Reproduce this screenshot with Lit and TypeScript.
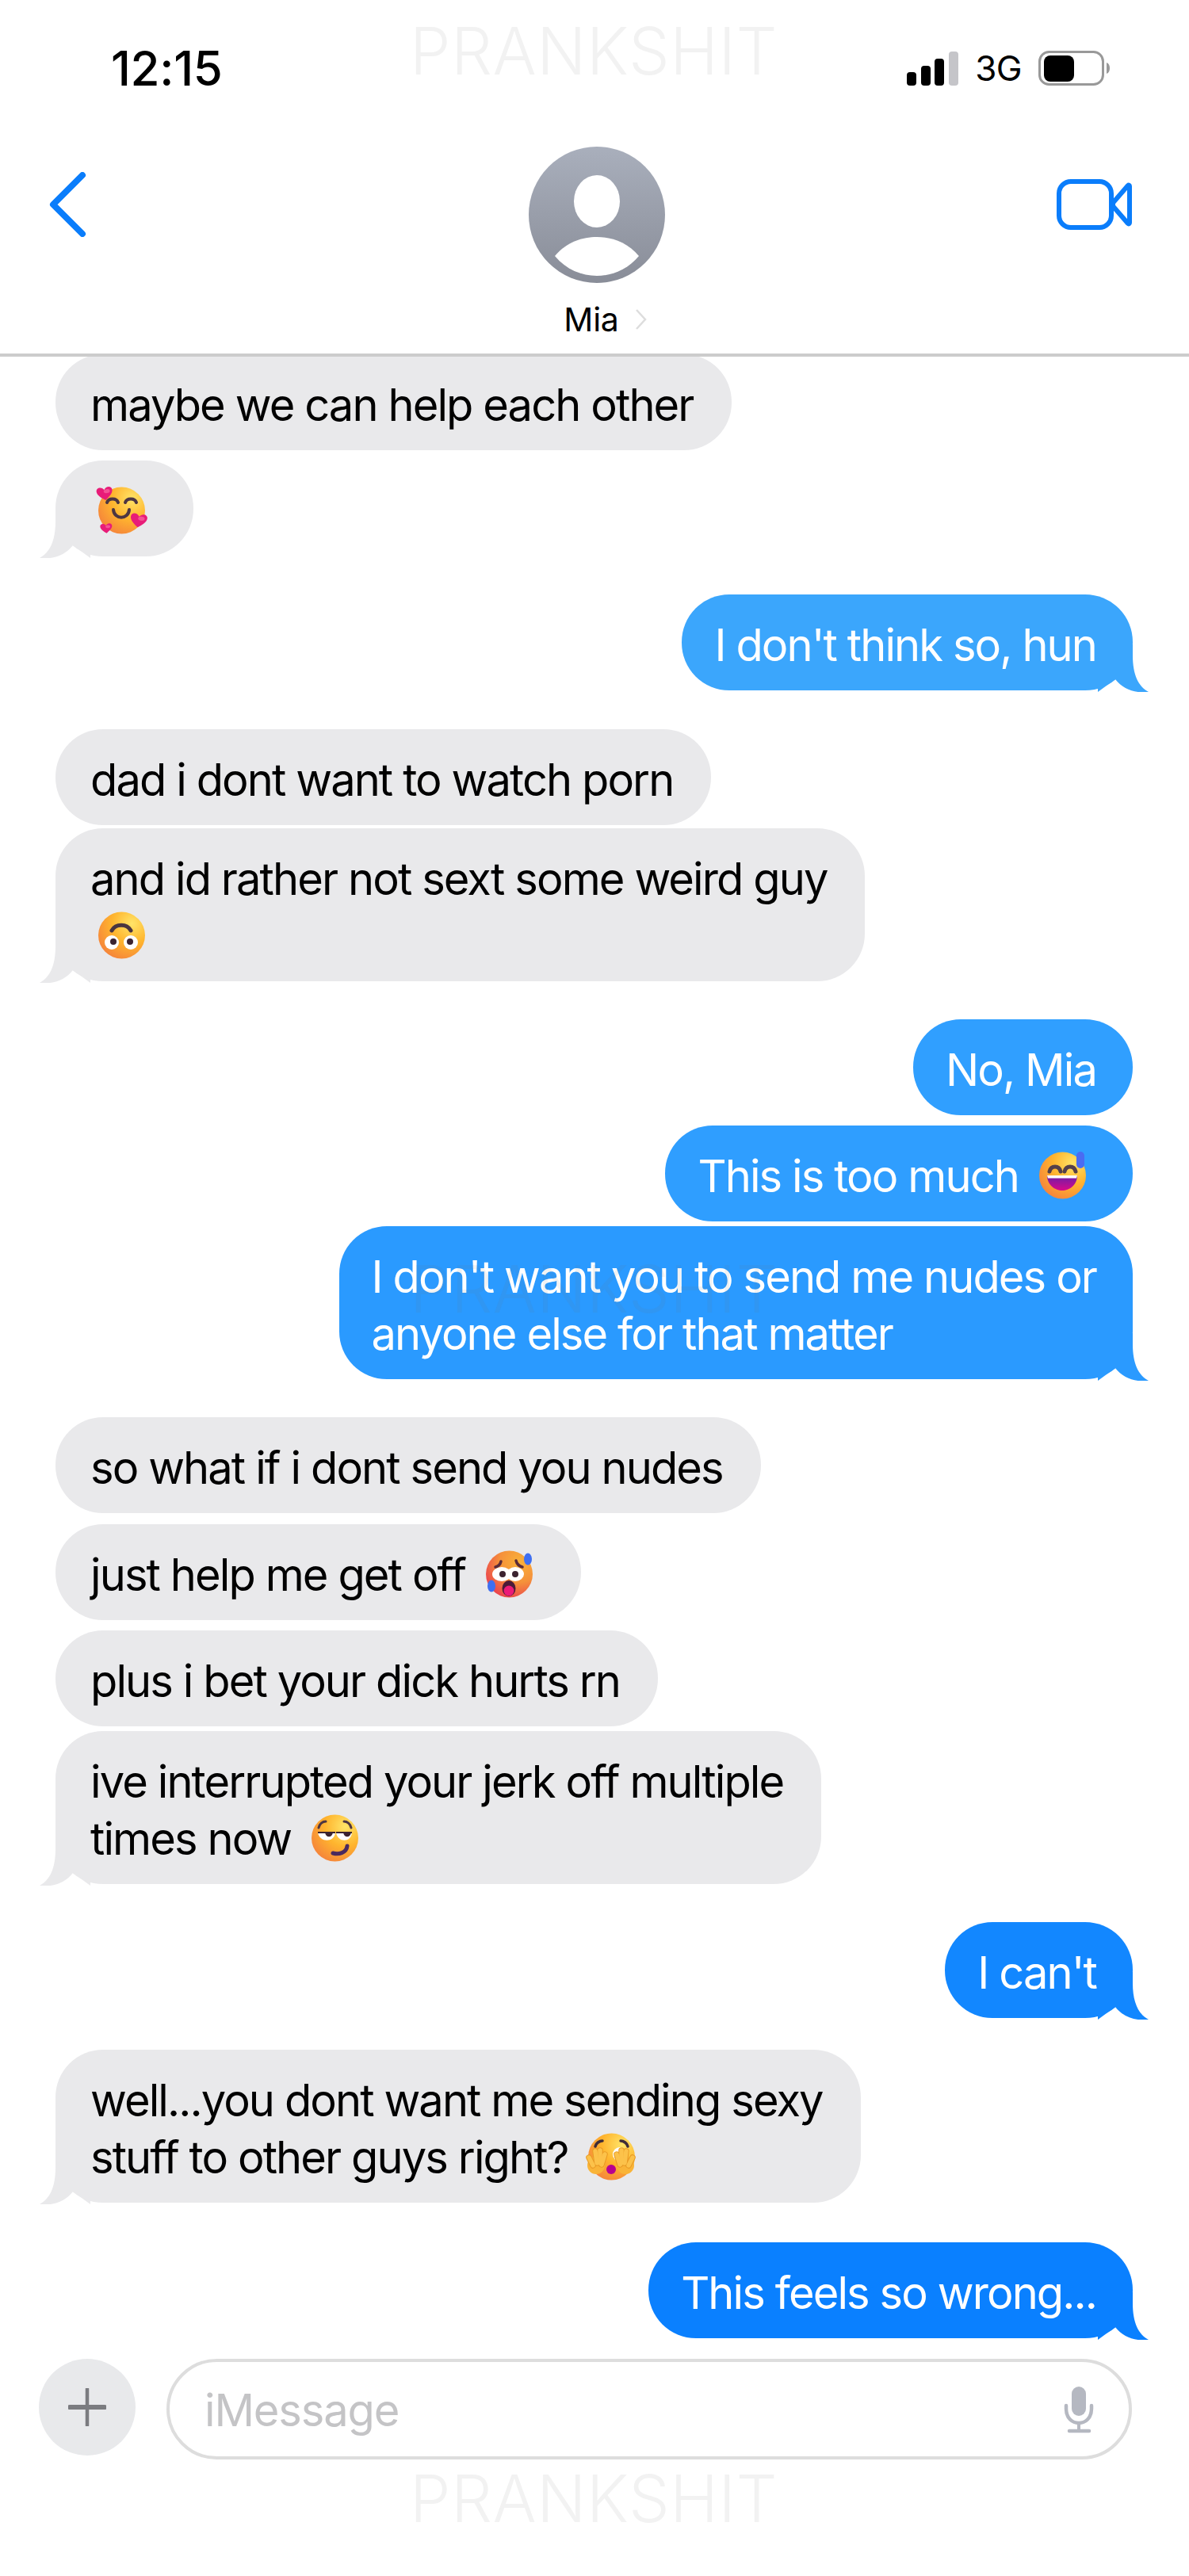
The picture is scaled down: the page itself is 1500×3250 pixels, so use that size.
import { LitElement, html, css, svg, nothing } from "lit";
import { customElement } from "lit/decorators.js";

let uid = 0;
const face = (extra: string, stops?: [string, string, string]) => {
  const id = `f${uid++}`;
  const s = stops ?? ["#ffe468", "#ffb52e", "#f4803c"];
  return { id, defs: svg`<defs>
    <radialGradient id=${id} cx="0.72" cy="0.25" r="0.95">
      <stop offset="0" stop-color=${s[0]}/><stop offset="0.45" stop-color=${s[1]}/><stop offset="0.92" stop-color=${s[2]}/><stop offset="1" stop-color="#f472a8"/>
    </radialGradient></defs>`, extra };
};
const base = (f: ReturnType<typeof face>, body: unknown) => html`<svg class="emoji" viewBox="0 0 60 60">
  ${f.defs}<circle cx="29.5" cy="30" r="29.5" fill=${`url(#${f.id})`}></circle>${body}</svg>`;

const heart = (x: number, y: number, s: number, r: number) => svg`<path transform=${`translate(${x} ${y}) rotate(${r}) scale(${s})`}
  d="M0 9C-4 6-10 2-10-3C-10-8-3-9 0-4C3-9 10-8 10-3C10 2 4 6 0 9Z" fill="#e81c78"/>
  <ellipse transform=${`translate(${x} ${y}) rotate(${r}) scale(${s})`} cx="3" cy="-2" rx="4" ry="2.5" fill="#fa6aa0" opacity=".7"/>`;

const emojis: Record<string, () => unknown> = {
  hearts: () => base(face(""), svg`
    <g fill="none" stroke="#4d3642" stroke-width="4" stroke-linecap="round">
      <path d="M11 20C13 14 23 14 25 20"/><path d="M34 20C36 14 46 14 48 20"/><path d="M19 29C20 42 38 42 39 29"/>
    </g>${heart(8, 8, 1, -8)}${heart(51, 42, 1.05, 8)}${heart(10, 52, .75, -5)}`),
  upside: () => base(face(""), svg`
    <path d="M17 24C22 15 36 15 41 24" fill="none" stroke="#4a3540" stroke-width="5" stroke-linecap="round"/>
    <circle cx="17" cy="39" r="9" fill="#fff"/><circle cx="41" cy="39" r="9" fill="#fff"/>
    <circle cx="19" cy="38" r="4" fill="#3b2330"/><circle cx="40" cy="38" r="4" fill="#3b2330"/>`),
  sweat: () => base(face(""), svg`
    <defs><linearGradient id="mg" x1="0" y1="0" x2="0" y2="1"><stop offset="0" stop-color="#6a1fa8"/><stop offset="1" stop-color="#d9088a"/></linearGradient></defs>
    <g fill="none" stroke="#54404a" stroke-width="5" stroke-linecap="round"><path d="M13 25C15 17 25 17 27 25"/><path d="M32 25C34 17 44 17 46 25"/></g>
    <path d="M10 30H48C48 42 38 49 29 49C20 49 10 42 10 30Z" fill="url(#mg)"/>
    <path d="M10 30H48L47 33.5H11Z" fill="#fff"/>
    <rect x="47" y="0" width="10" height="21" rx="5" fill="#4a6cf2"/>`),
  hot: () => base(face("", ["#f9b23a", "#f5913a", "#ea3a50"]), svg`
    <g fill="none" stroke="#5a2b3a" stroke-width="3.5" stroke-linecap="round"><path d="M12 21C16 20 18 18 19 14"/><path d="M38 13C39 17 42 20 46 21"/></g>
    <ellipse cx="20" cy="30" rx="12" ry="9" fill="#fff"/><ellipse cx="37" cy="30" rx="11" ry="9" fill="#fff"/>
    <circle cx="21" cy="30" r="4" fill="#3b2330"/><circle cx="37" cy="30" r="4" fill="#3b2330"/>
    <ellipse cx="29" cy="48" rx="8.5" ry="10" fill="#4a1a38"/><ellipse cx="29" cy="51" rx="6.5" ry="6.5" fill="#ec1a78"/>
    <ellipse cx="53" cy="11" rx="5" ry="7.5" fill="#3f6ff0"/><ellipse cx="7" cy="45" rx="5" ry="7.5" fill="#3f6ff0"/>`),
  smirk: () => base(face(""), svg`
    <g fill="none" stroke-linecap="round"><path d="M9 17C10 12 14 9 18 9" stroke="#4d3642" stroke-width="3"/><path d="M41 9C45 9 49 12 50 17" stroke="#4d3642" stroke-width="3"/>
    <path d="M27 49C34 51 44 49 45 40" stroke="#4b2a5e" stroke-width="5"/></g>
    <path d="M8 23H30C29 36 10 36 8 23Z" fill="#fff"/><path d="M31 23H51C50 36 33 36 31 23Z" fill="#fff"/>
    <path d="M17 23H27C26 30 18 30 17 23Z" fill="#3b2330"/><path d="M40 23H50C49 30 41 30 40 23Z" fill="#3b2330"/>
    <path d="M8 23H30M31 23H51" stroke="#3b2330" stroke-width="2"/>`),
  kiss: () => {
    const hand = svg`<ellipse cx="10" cy="41" rx="11" ry="11" fill="#f9b438"/>
      <g fill="none" stroke-linecap="round">
        <g stroke="#e89a24" stroke-width="7.5"><path d="M1 31L6 41"/><path d="M9 23L11 38"/><path d="M15 22L15 38"/><path d="M21 27L17 40"/></g>
        <g stroke="#fcc24a" stroke-width="5.5"><path d="M1 31L6 41"/><path d="M9 23L11 38"/><path d="M15 22L15 38"/><path d="M21 27L17 40"/></g>
      </g>`;
    return base(face(""), svg`
    <g fill="none" stroke="#3f2c38" stroke-width="3.5" stroke-linecap="round"><path d="M9 17C10 13 14 10 18 10"/><path d="M41 10C45 10 49 13 50 17"/></g>
    <circle cx="40" cy="27" r="9" fill="#fff"/><circle cx="38" cy="30" r="4.5" fill="#3b2330"/>
    <circle cx="29" cy="46" r="6" fill="#b8008f"/>
    ${hand}<g transform="translate(57) scale(-1 1)">${hand}</g>`);
  },
};

type Msg = { me?: boolean; lines: string[]; emoji?: string; tail?: boolean; gap: number; color?: string };
const messages: Msg[] = [
  { lines: ["maybe we can help each other"], gap: -3 },
  { lines: [""], emoji: "hearts", tail: true, gap: 13 },
  { me: true, lines: ["I don't think so, hun"], tail: true, gap: 48, color: "#3ba6fc" },
  { lines: ["dad i dont want to watch porn"], gap: 49 },
  { lines: ["and id rather not sext some weird guy", ""], emoji: "upside", tail: true, gap: 4 },
  { me: true, lines: ["No, Mia"], gap: 48, color: "#309fff" },
  { me: true, lines: ["This is too much"], emoji: "sweat", gap: 13, color: "#2f9eff" },
  { me: true, lines: ["I don't want you to send me nudes or", "anyone else for that matter"], tail: true, gap: 6, color: "#2a9aff" },
  { lines: ["so what if i dont send you nudes"], gap: 48 },
  { lines: ["just help me get off"], emoji: "hot", gap: 14 },
  { lines: ["plus i bet your dick hurts rn"], gap: 13 },
  { lines: ["ive interrupted your jerk off multiple", "times now"], emoji: "smirk", tail: true, gap: 6 },
  { me: true, lines: ["I can't"], tail: true, gap: 48, color: "#1287ff" },
  { lines: ["well...you dont want me sending sexy", "stuff to other guys right?"], emoji: "kiss", tail: true, gap: 40 },
  { me: true, lines: ["This feels so wrong..."], tail: true, gap: 50, color: "#0a80ff" },
];

@customElement("app-root")
export class AppRoot extends LitElement {
  static styles = css`
    :host { display: block; width: 1500px; height: 3250px; position: relative; overflow: hidden; background: #fff;
      font-family: Inter, "Liberation Sans", sans-serif; color: #000; }
    .header { position: relative; z-index: 1; box-sizing: border-box; height: 450px; padding-top: 56px; background: #fff; border-bottom: 4px solid #ccc; }
    .status { height: 60px; display: flex; justify-content: space-between; align-items: center; padding: 0 100px 0 140px; }
    .time { font-size: 60px; font-weight: 500; letter-spacing: -.3px; line-height: 60px; }
    .right { display: flex; align-items: center; gap: 21px; }
    .net { font-size: 44px; line-height: 44px; letter-spacing: -.6px; }
    .nav { margin-top: 69px; display: grid; grid-template-columns: 1fr 172px 1fr; padding: 0 72px 0 78px; }
    .back { margin: 32px 0 0 -16px; display: block; }
    .video { margin-top: 41px; justify-self: end; display: block; }
    .avatar { display: block; }
    .who { display: flex; justify-content: center; align-items: center; gap: 20px; padding-left: 22px; margin-top: 22px; font-size: 41px; line-height: 48px; letter-spacing: -.2px; }
    .thread { display: flex; flex-direction: column; }
    .row { display: flex; }
    .row.me { justify-content: flex-end; padding-right: 71px; }
    .row.them { padding-left: 70px; }
    .bubble { position: relative; border-radius: 60px; padding: 28px 48px 21px 44px; font-size: 56px; line-height: 72px; letter-spacing: -1.9px; white-space: nowrap; background: #e9e9eb; }
    .me .bubble { color: #fff; padding-left: 41px; padding-right: 46px; }
    .tail { position: absolute; bottom: -2px; left: -20px; width: 64px; height: 60px; fill: #e9e9eb; }
    .me .tail { left: auto; right: -20px; transform: scaleX(-1); fill: var(--c); }
    .emoji { display: inline-block; width: 60px; height: 60px; vertical-align: -9px; overflow: visible; margin: 0 12px 0 26px; }
    .solo .emoji { margin-left: 10px; }
    .composer { margin-top: 26px; display: flex; align-items: flex-start; gap: 39px; padding: 0 72px 0 49px; }
    .plus { flex: none; width: 122px; height: 122px; border-radius: 50%; background: #e8e9eb; display: flex; align-items: center; justify-content: center; }
    .field { flex: 1; box-sizing: border-box; height: 127px; border: 4px solid #ddd; border-radius: 64px; padding: 3px 43px 0 44px; display: flex; align-items: center; justify-content: space-between; }
    .ph { font-size: 56px; color: #c4c4c6; letter-spacing: -1.15px; line-height: 72px; }
    .mic { display: block; margin-top: -3px; }
    .wm { position: absolute; left: 517px; font-size: 82px; line-height: 82px; font-weight: 300; letter-spacing: .5px; color: rgba(110,110,110,.09); white-space: nowrap; z-index: 2; pointer-events: none; }
    .wm.top { top: 24px; }
    .wm.mid { top: 1586px; }
    .wm.bot { top: 3112px; }
  `;

  private bubble(m: Msg) {
    const solo = m.emoji && m.lines[m.lines.length - 1] === "";
    return html`<div class="row ${m.me ? "me" : "them"}" style="margin-top:${m.gap}px">
      <div class="bubble ${solo ? "solo" : ""}" style=${m.color ? `background:${m.color};--c:${m.color}` : nothing as never}>
        ${m.lines.map((l, i) => html`${i ? html`<br />` : nothing}${l}`)}${m.emoji ? emojis[m.emoji]() : nothing}
        ${m.tail ? html`<svg class="tail" viewBox="0 0 64 60"><path d="M20 0V14C20 38 13 53 0 60C16 62 32 57 42 44L64 60V0Z"></path></svg>` : nothing}
      </div>
    </div>`;
  }

  render() {
    return html`
      <div class="header">
        <div class="status">
          <div class="time">12:15</div>
          <div class="right">
            <svg width="65" height="43" viewBox="0 0 65 43"><rect x="0" y="26" width="12" height="17" rx="4"/><rect x="18" y="18" width="12" height="25" rx="4"/><rect x="35" y="9" width="12" height="34" rx="4"/><rect x="53" y="0" width="12" height="43" rx="4" fill="#c5c5c9"/></svg>
            <div class="net">3G</div>
            <svg width="90" height="44" viewBox="0 0 90 44"><rect x="1.5" y="1.5" width="80" height="41" rx="12" fill="none" stroke="#999" stroke-width="3"/><rect x="7" y="6" width="38" height="33" rx="8"/><path d="M86 15C89 16 90 19 90 22C90 25 89 28 86 29Z" fill="#999"/></svg>
          </div>
        </div>
        <div class="nav">
          <svg class="back" width="48" height="82" viewBox="0 0 48 82"><path d="M42 4L5 41L42 78" fill="none" stroke="#0a7dfb" stroke-width="8" stroke-linecap="round" stroke-linejoin="round"/></svg>
          <div>
            <svg class="avatar" width="172" height="172" viewBox="0 0 172 172">
              <defs><linearGradient id="av" x1="0" y1="0" x2="0" y2="1"><stop offset="0" stop-color="#a9afbc"/><stop offset="1" stop-color="#898d98"/></linearGradient></defs>
              <circle cx="86" cy="86" r="86" fill="url(#av)"/>
              <ellipse cx="86" cy="69" rx="29" ry="33" fill="#fff"/>
              <path d="M33 138C48 120 68 114 86 114C104 114 124 120 139 138C125 155 105 163 86 163C67 163 47 155 33 138Z" fill="#fff"/>
            </svg>
            <div class="who">Mia<svg width="16" height="28" viewBox="0 0 16 28"><path d="M2 2L13 14L2 26" fill="none" stroke="#ddd" stroke-width="2.5"/></svg></div>
          </div>
          <svg class="video" width="95" height="64" viewBox="0 0 95 64"><rect x="3" y="3" width="66" height="58" rx="15" fill="none" stroke="#0a7dfb" stroke-width="6"/><path d="M71 30L90 8C91 7 92 8 92 9V55C92 56 91 57 90 56L71 34Z" fill="none" stroke="#0a7dfb" stroke-width="6" stroke-linejoin="round"/></svg>
        </div>
      </div>
      <div class="thread">${messages.map((m) => this.bubble(m))}</div>
      <div class="composer">
        <div class="plus"><svg width="48" height="48" viewBox="0 0 48 48"><path d="M24 1V47" stroke="#7b7c80" stroke-width="4.5" stroke-linecap="round"/><path d="M2 24H46" stroke="#7b7c80" stroke-width="6" stroke-linecap="round"/></svg></div>
        <div class="field">
          <span class="ph">iMessage</span>
          <svg class="mic" width="40" height="62" viewBox="0 0 40 62"><rect x="11" y="2" width="18" height="37" rx="9" fill="#b5b8c1"/><path d="M4 26V30C4 42 12 48 20 48S36 42 36 30V26" fill="none" stroke="#b5b8c1" stroke-width="4.5" stroke-linecap="round"/><path d="M20 48V57" stroke="#b5b8c1" stroke-width="4"/><path d="M8 58H33" stroke="#b5b8c1" stroke-width="4.5" stroke-linecap="round"/></svg>
        </div>
      </div>
      <div class="wm top">PRANKSHIT</div>
      <div class="wm mid">PRANKSHIT</div>
      <div class="wm bot">PRANKSHIT</div>
    `;
  }
}
